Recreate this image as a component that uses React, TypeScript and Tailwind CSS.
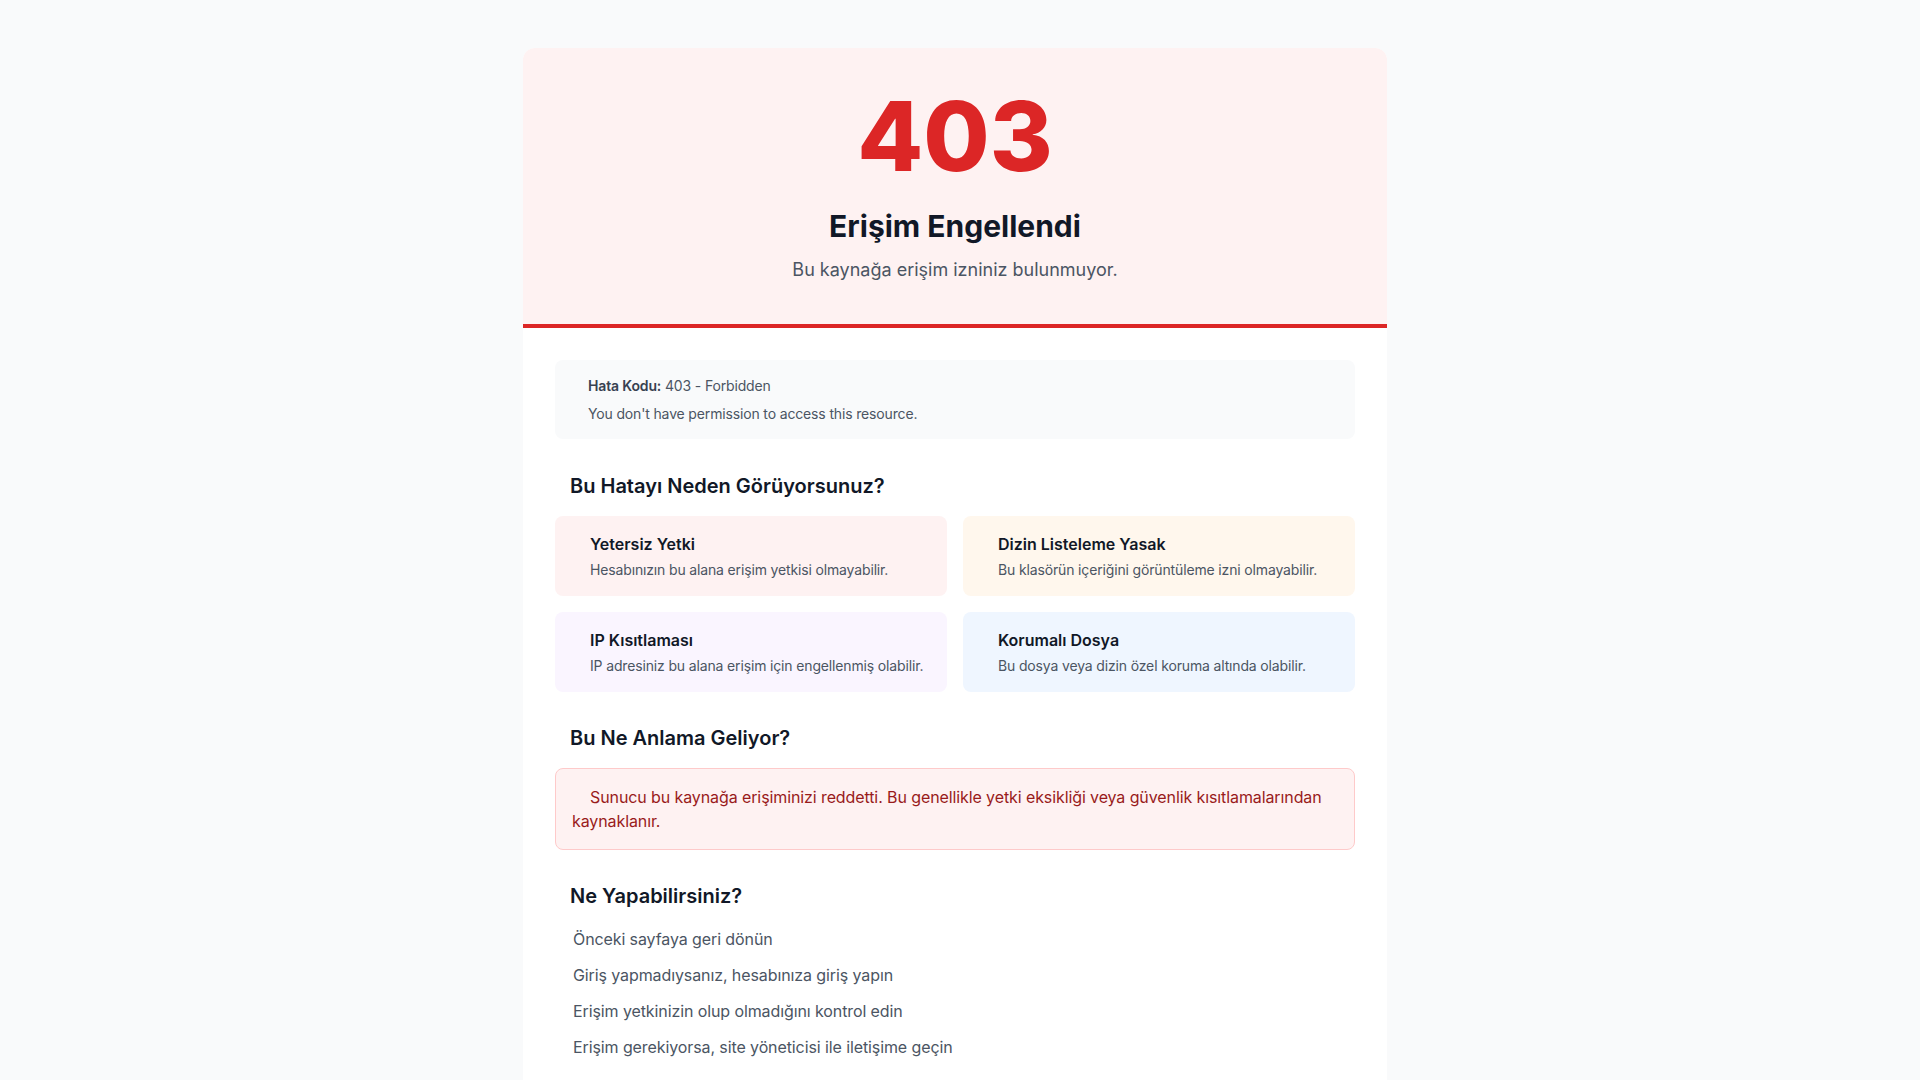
import React from 'react';

const reasons = [
  { title: 'Yetersiz Yetki', text: 'Hesabınızın bu alana erişim yetkisi olmayabilir.', bg: 'bg-[#fef2f2]' },
  { title: 'Dizin Listeleme Yasak', text: 'Bu klasörün içeriğini görüntüleme izni olmayabilir.', bg: 'bg-[#fff7ed]' },
  { title: 'IP Kısıtlaması', text: 'IP adresiniz bu alana erişim için engellenmiş olabilir.', bg: 'bg-[#faf5ff]' },
  { title: 'Korumalı Dosya', text: 'Bu dosya veya dizin özel koruma altında olabilir.', bg: 'bg-[#eff6ff]' },
];

const steps = [
  'Önceki sayfaya geri dönün',
  'Giriş yapmadıysanız, hesabınıza giriş yapın',
  'Erişim yetkinizin olup olmadığını kontrol edin',
  'Erişim gerekiyorsa, site yöneticisi ile iletişime geçin',
];

export default function App() {
  return (
    <div className="min-h-screen bg-[#f9fafb] py-12 pr-[10px] font-['Inter','Noto_Sans',sans-serif]">
      <div className="max-w-4xl mx-auto px-4">
        <div className="bg-white rounded-xl overflow-hidden">
          {/* Header */}
          <div className="bg-[#fef2f2] border-b-4 border-[#dc2626] pt-10 pb-10 text-center">
            <div className="text-8xl leading-none font-extrabold text-[#dc2626]">403</div>
            <h1 className="mt-6 text-3xl leading-9 font-bold text-[#111827]">Erişim Engellendi</h1>
            <p className="mt-3 text-lg leading-7 text-[#4b5563]">Bu kaynağa erişim izniniz bulunmuyor.</p>
          </div>

          {/* Body */}
          <div className="px-8 pt-8 pb-[112px]">
            <div className="bg-[#f9fafb] rounded-lg pl-[33px] pr-4 pt-[14px] pb-[13px] text-sm tracking-[-0.15px] text-[#4b5563]">
              <p className="leading-6">
                <span className="font-semibold text-[#374151]">Hata Kodu:</span> 403 - Forbidden
              </p>
              <p className="mt-1 leading-6">You don't have permission to access this resource.</p>
            </div>

            <h2 className="mt-[33px] pl-[15px] text-xl leading-7 font-semibold text-[#111827]">Bu Hatayı Neden Görüyorsunuz?</h2>
            <div className="mt-4 grid grid-cols-2 gap-4">
              {reasons.map((r) => (
                <div key={r.title} className={`${r.bg} rounded-lg py-4 pl-[35px] pr-2`}>
                  <h3 className="text-base leading-6 font-semibold text-[#111827]">{r.title}</h3>
                  <p className="mt-1 text-sm leading-5 tracking-[-0.15px] text-[#4b5563]">{r.text}</p>
                </div>
              ))}
            </div>

            <h2 className="mt-8 pl-[15px] text-xl leading-7 font-semibold text-[#111827]">Bu Ne Anlama Geliyor?</h2>
            <div className="mt-4 bg-[#fef2f2] border border-[#fecaca] rounded-lg p-4 text-base leading-6 tracking-[-0.1px] text-[#991b1b]">
              <p className="indent-[18px]">
                Sunucu bu kaynağa erişiminizi reddetti. Bu genellikle yetki eksikliği veya güvenlik kısıtlamalarından kaynaklanır.
              </p>
            </div>

            <h2 className="mt-8 pl-[15px] text-xl leading-7 font-semibold text-[#111827]">Ne Yapabilirsiniz?</h2>
            <ul className="mt-[11px]">
              {steps.map((s) => (
                <li key={s} className="py-1.5 pl-[18px] text-base leading-6 tracking-[-0.1px] text-[#4b5563]">{s}</li>
              ))}
            </ul>
          </div>
        </div>
      </div>
    </div>
  );
}
